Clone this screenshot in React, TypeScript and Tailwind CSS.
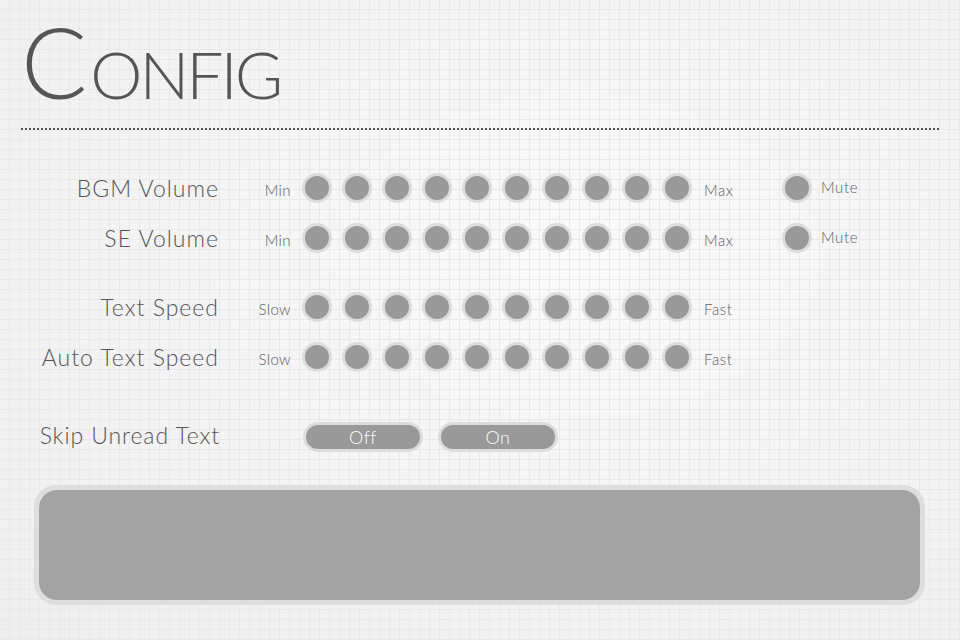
const dots = Array.from({ length: 10 }, (_, i) => i);

function Dot() {
  return (
    <div className="w-[30px] h-[30px] rounded-full bg-[#dcdcdc] p-[3px] shrink-0">
      <div className="w-full h-full rounded-full bg-[#999999]" />
    </div>
  );
}

function SliderRow({
  label,
  low,
  high,
  mute,
}: {
  label: string;
  low: string;
  high: string;
  mute?: boolean;
}) {
  return (
    <div className="flex items-center h-[30px]">
      <div className="w-[219px] text-right text-[23px] font-light text-[#555] tracking-[1px] leading-none">
        {label}
      </div>
      <div className="w-[72px] text-right text-[15px] font-light text-[#5e5e5e] tracking-[0.4px] leading-none pt-[5px]">
        {low}
      </div>
      <div className="flex gap-[10px] ml-[11px]">
        {dots.map((i) => (
          <Dot key={i} />
        ))}
      </div>
      <div className="w-[90px] pl-[12px] text-[15px] font-light text-[#5e5e5e] tracking-[0.6px] leading-none pt-[5px]">
        {high}
      </div>
      {mute && (
        <div className="flex items-center">
          <Dot />
          <span className="ml-[9px] text-[15px] font-light text-[#5e5e5e] tracking-[0.6px] leading-none pb-[2px]">
            Mute
          </span>
        </div>
      )}
    </div>
  );
}

function Pill({ text }: { text: string }) {
  return (
    <div className="w-[120px] h-[30px] rounded-full bg-[#dcdcdc] p-[3px]">
      <div className="w-full h-full rounded-full bg-[#999999] flex items-center justify-center text-white text-[18px] font-light tracking-[0.5px] leading-none">
        {text}
      </div>
    </div>
  );
}

export default function App() {
  return (
    <div
      className="w-[960px] h-[640px] overflow-hidden bg-[#f2f2f2] bg-[linear-gradient(to_right,transparent_9px,#e9e9e9_9px,#e9e9e9_10px,transparent_10px),linear-gradient(to_bottom,transparent_9px,#e9e9e9_9px,#e9e9e9_10px,transparent_10px),radial-gradient(ellipse_at_60%_40%,#fafafa_0%,#f3f3f3_60%,#eeeeee_100%)] bg-[size:10px_10px,10px_10px,100%_100%]"
      style={{ fontFamily: "Lato, 'Open Sans', sans-serif" }}
    >
      <div className="pl-[21px] pt-[12px] h-[114px] flex items-baseline text-[#555] font-light leading-none">
        <span className="text-[98px] tracking-[-1px]">C</span>
        <span className="text-[66px] ml-[4px] tracking-[-3px]">ONFIG</span>
      </div>
      <div className="mx-[21px] mt-[14px] h-[2px] bg-[linear-gradient(to_right,#555_50%,transparent_50%)] bg-[size:4px_2px]" />

      <div className="mt-[43px] flex flex-col">
        <SliderRow label="BGM Volume" low="Min" high="Max" mute />
        <div className="mt-[20px]">
          <SliderRow label="SE Volume" low="Min" high="Max" mute />
        </div>
        <div className="mt-[39px]">
          <SliderRow label="Text Speed" low="Slow" high="Fast" />
        </div>
        <div className="mt-[20px]">
          <SliderRow label="Auto Text Speed" low="Slow" high="Fast" />
        </div>
        <div className="mt-[50px] flex items-center h-[30px]">
          <div className="w-[220px] text-right text-[23px] font-light text-[#555] tracking-[0.9px] leading-none pb-[4px]">
            Skip Unread Text
          </div>
          <div className="ml-[83px] flex gap-[15px]">
            <Pill text="Off" />
            <Pill text="On" />
          </div>
        </div>
      </div>

      <div className="mt-[33px] ml-[34px] w-[891px] h-[120px] rounded-[22px] bg-[#dedede] p-[5px]">
        <div className="w-full h-full rounded-[18px] bg-[#a3a3a3]" />
      </div>
    </div>
  );
}
